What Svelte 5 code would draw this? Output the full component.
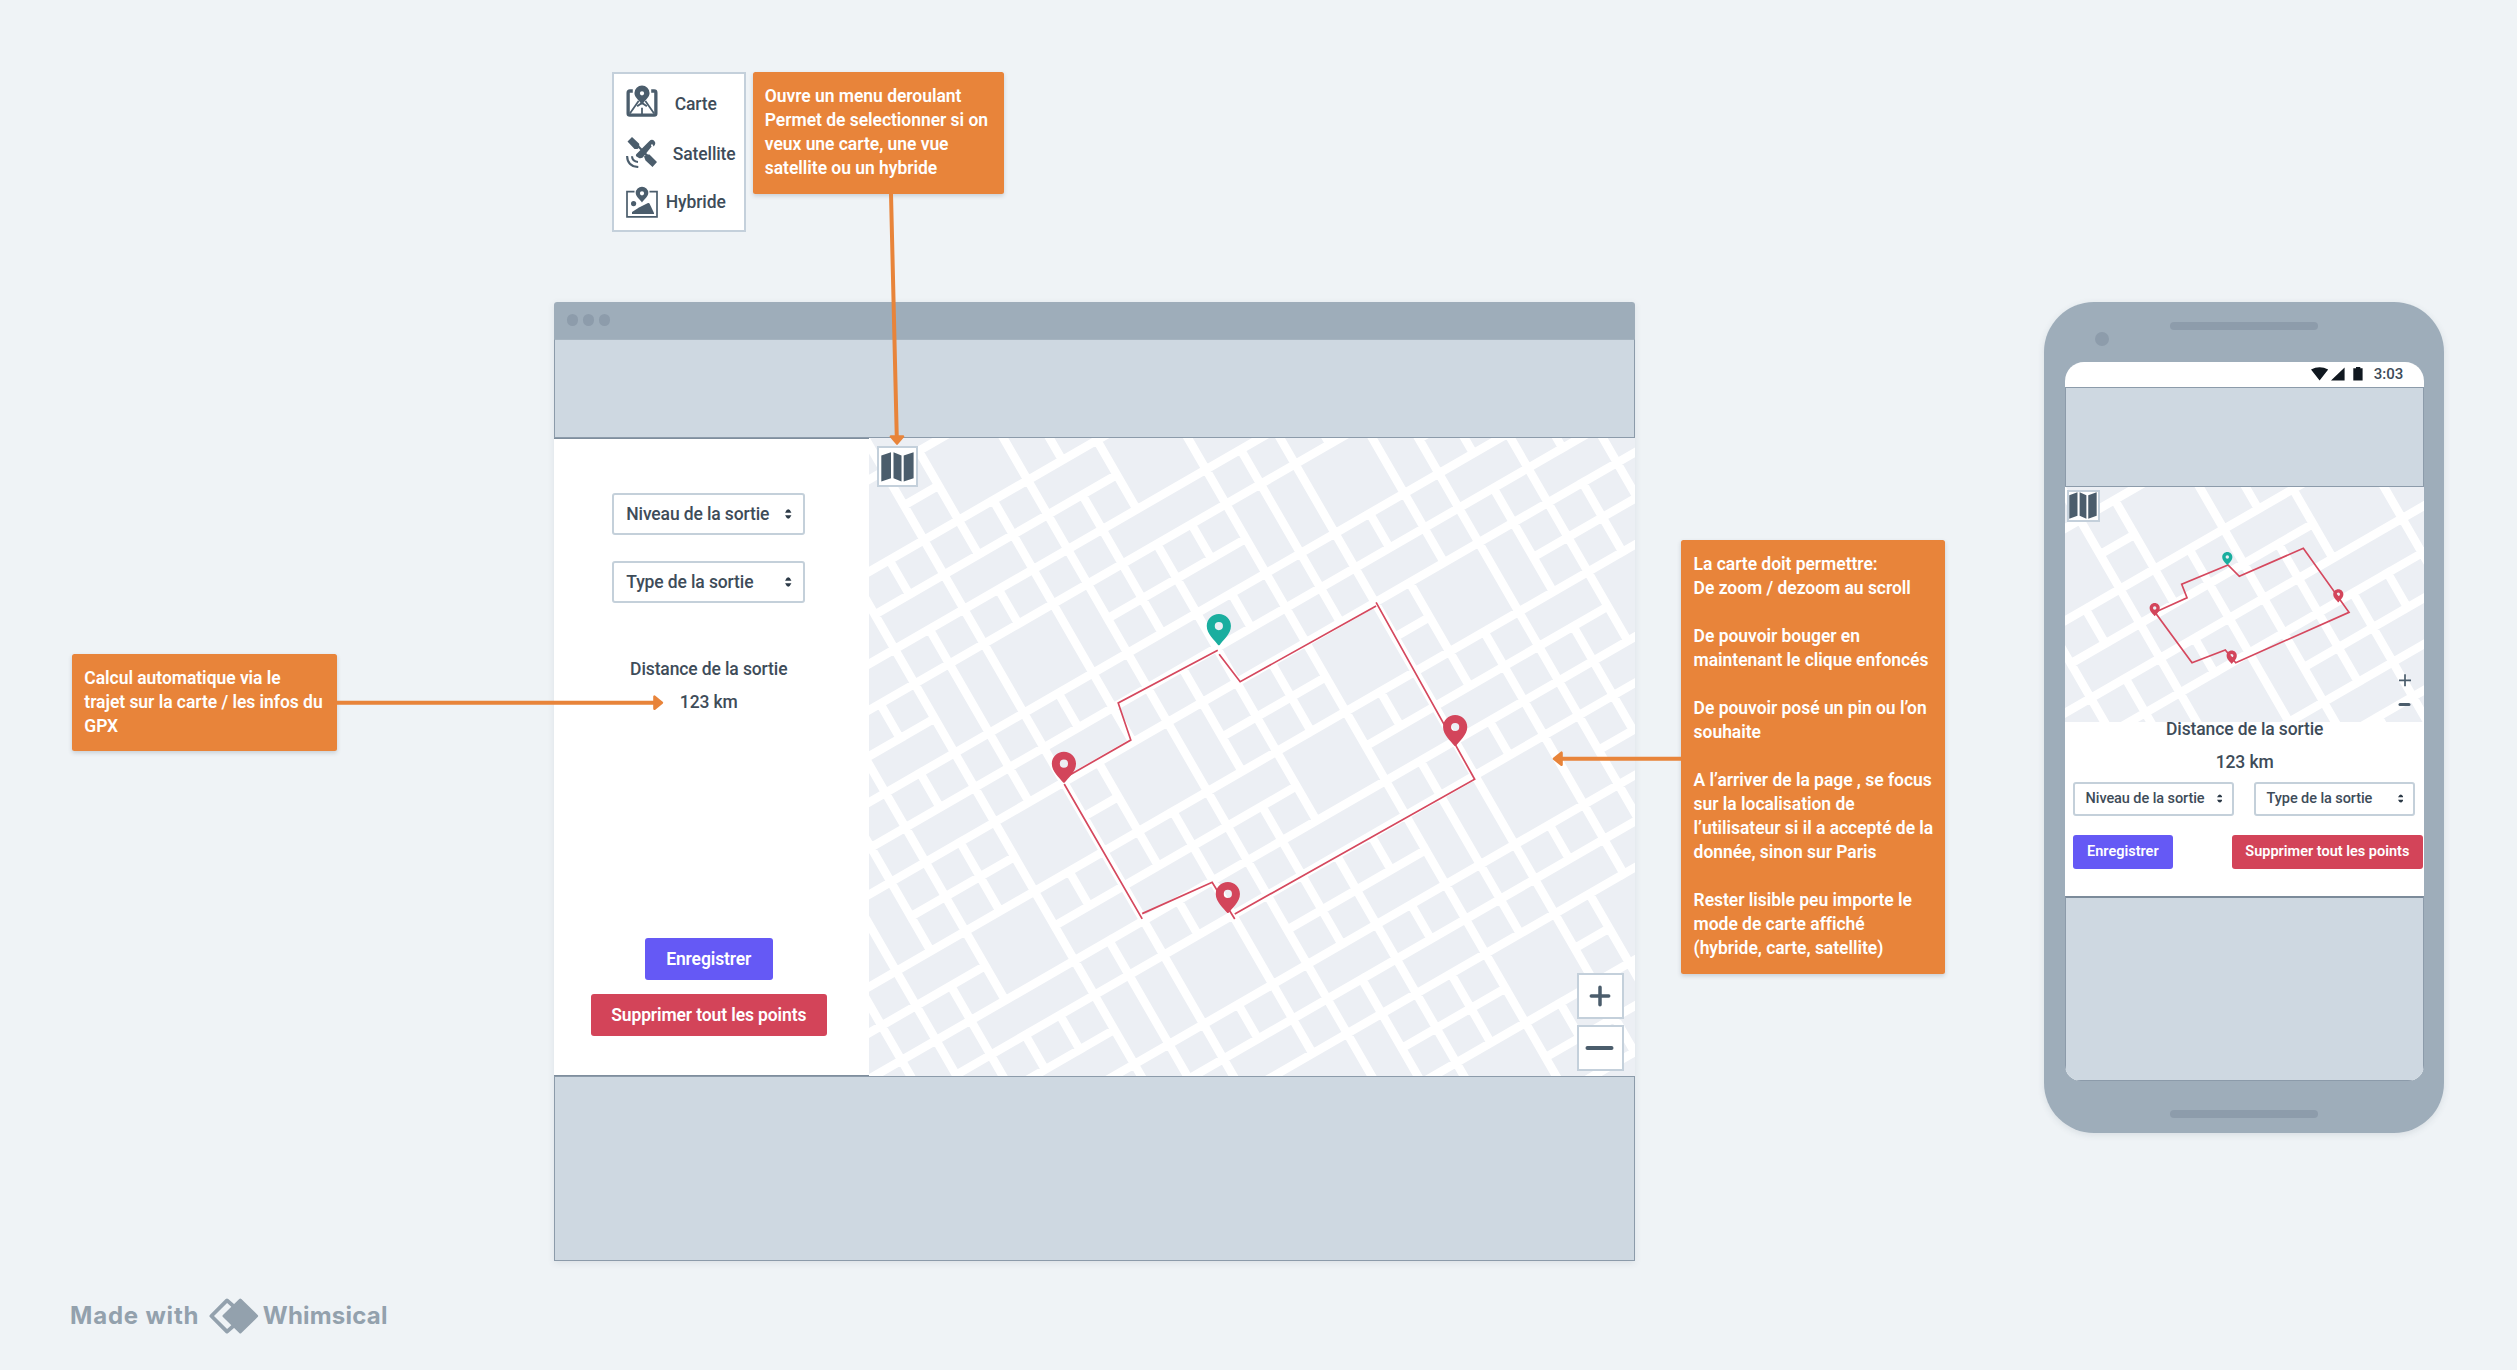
<script>
  // Street grid in block units: rows run along the long axis, columns across it.
  const rows = {
    '-2': [[-1, 2]], '-1': [[0, 1]], 0: [[-2, 5.8]], 1: [[-2, 5]], 2: [[-3, 9]], 3: [[-4, 11]],
    4: [[-4, -2], [3, 7], [12, 13]], 5: [[-5, 14.5]], 6: [[-6, 16]], 7: [[-6, 18]],
    8: [[-5, -2], [0, 1], [4, 7], [9, 10], [13, 17]], 9: [[-7, 17]],
    10: [[-8, -4], [-2, 5], [7, 14]], 11: [[-8, 15]], 12: [[-6, 15]],
    13: [[-5, -2], [3, 7], [12, 13]], 14: [[-3, 13]], 15: [[-2, 12]], 16: [[0, 12]],
    17: [[4, 7], [9, 10]], 18: [[4, 11]], 19: [[7, 10]], 20: [[7, 10]]
  };
  const cols = {
    '-7': [[9, 12]], '-6': [[7, 12]], '-5': [[5, 9], [10, 13]], '-4': [[4, 11], [12, 13]],
    '-3': [[3, 4], [5, 6], [7, 9], [12, 13]], '-2': [[0, 15]],
    '-1': [[0, 1], [2, 7], [9, 10], [11, 15]], 0: [[-3, 16]],
    1: [[-2, 1], [2, 3], [5, 6], [7, 10], [11, 12], [14, 15]], 2: [[0, 7], [9, 16]],
    3: [[-2, 18]], 4: [[-1, 0], [1, 5], [6, 9], [10, 14], [15, 19]],
    5: [[0, 2], [3, 11], [12, 19]], 6: [[3, 4], [5, 6], [7, 9], [12, 13], [14, 15], [16, 18]],
    7: [[0, 20]], 8: [[2, 7], [9, 10], [11, 16], [18, 19]], 9: [[1, 20]],
    10: [[2, 3], [5, 6], [7, 10], [11, 12], [14, 15], [16, 19]], 11: [[3, 7], [9, 16]],
    12: [[3, 15]], 13: [[4, 5], [6, 9], [10, 13]], 14: [[5, 11]], 15: [[5, 6], [7, 9]], 16: [[5, 8]]
  };
  const streets =
    Object.entries(rows).flatMap(([j, s]) => s.map(([a, b]) => `M${a} ${j}H${b}`)).join('') +
    Object.entries(cols).flatMap(([i, s]) => s.map(([a, b]) => `M${i} ${a}V${b}`)).join('');

  const pins = [
    { x: 350, y: 176, kind: 'start' },
    { x: 195, y: 313.7, kind: 'stop' },
    { x: 586.4, y: 277, kind: 'stop' },
    { x: 359, y: 444, kind: 'stop' }
  ];
  const phonePins = [
    { x: 162.3, y: 65, kind: 'start' },
    { x: 89.7, y: 116, kind: 'stop' },
    { x: 273.3, y: 102.3, kind: 'stop' },
    { x: 166.7, y: 163.6, kind: 'stop' }
  ];
</script>

{#snippet grid()}
  <g transform="translate(55 102) rotate(-30) scale(39.95)">
    <path class="street" d={streets} />
  </g>
{/snippet}

{#snippet pin(p, s)}
  <path
    class={p.kind}
    transform="translate({p.x} {p.y}) scale({s})"
    fill-rule="evenodd"
    d="M0 0C-6.7 0-12.1 5.3-12.1 12C-12.1 20-4 26.5-1 30.6Q0 31.6 1 30.6C4 26.5 12.1 20 12.1 12C12.1 5.3 6.7 0 0 0ZM0 7.9A4.1 4.1 0 1 1 0 16.1A4.1 4.1 0 1 1 0 7.9Z"
  />
{/snippet}

{#snippet mapIcon()}
  <svg class="map-icon" viewBox="0 0 33 30" preserveAspectRatio="none">
    <path d="M.3 3.5L10 .2V26.3L.3 29.6ZM12.5 .2L20.5 3.5V29.6L12.5 26.3ZM22.7 3.5L32.6 .2V26.3L22.7 29.6Z" />
  </svg>
{/snippet}

{#snippet select(label)}
  <div class="select">
    <span>{label}</span>
    <svg viewBox="0 0 7 11"><path d="M0 4Q3.5-3.4 7 4ZM0 7H7Q3.5 14.4 0 7Z" /></svg>
  </div>
{/snippet}

<main class="board">
  <section class="node layers">
    <div class="layer carte">
      <svg viewBox="0 0 32 33">
        <path fill="none" stroke="currentColor" stroke-width="3.4" d="M6.5 6.2H3.5Q1.7 6.2 1.7 8V29.3Q1.7 31 3.5 31H28.5Q30.3 31 30.3 29.3V8Q30.3 6.2 28.5 6.2H25.5" />
        <path fill="none" stroke="currentColor" stroke-width="1.8" d="M12.5 16.5L3.5 29.5M19.5 16.5L28.5 29.5M16 23.5V30M11 22L16 18.5L21 22" />
        <path fill-rule="evenodd" d="M16 .5A7.8 7.8 0 0 0 8.2 8.3C8.2 13 12.5 15 16 20.5C19.5 15 23.8 13 23.8 8.3A7.8 7.8 0 0 0 16 .5ZM16 6.4A2.2 2.2 0 1 1 16 10.8A2.2 2.2 0 1 1 16 6.4Z" />
      </svg>
      <span>Carte</span>
    </div>
    <div class="layer sat">
      <svg viewBox="0 0 32 32">
        <path d="M1.5 5.5L6 1L13.2 7.8V11.5L11.5 13H8.5ZM18 20.5L20.5 18.5H23.5L31 26L26.5 31L19.5 24.5Z" />
        <path d="M10.5 10L12 8.6L23 20L21.6 21.4Z" />
        <path d="M10.2 18.2L23.2 5.2Q26 2.6 28.3 5Q30.6 7.4 27.6 10.4L27 9.2Q26.5 7.8 25.2 8.6Q24.6 9.4 25.6 10.6L16.8 21.6Q14.8 22.6 13.4 22.2L10.4 20.4Q9.4 19.4 10.2 18.2Z" />
        <path fill="none" stroke="currentColor" stroke-width="2.1" d="M6 20.3Q6.3 25.6 12 26M1.1 20Q1.3 30.4 12.3 31" />
      </svg>
      <span>Satellite</span>
    </div>
    <div class="layer hyb">
      <svg viewBox="0 0 32 32">
        <path fill="none" stroke="currentColor" stroke-width="1.7" d="M8.5 5.6H1V30.8H31V5.6H23.5" />
        <circle cx="7.6" cy="17.6" r="2.6" />
        <path d="M6 28V26L13 21.5L22 17Q23 16.6 23.5 17.5L28 27V28Z" />
        <path fill-rule="evenodd" d="M16 .8A6.3 6.3 0 0 0 9.7 7C9.7 10.5 14 13.5 16 16.4C18 13.5 22.3 10.5 22.3 7A6.3 6.3 0 0 0 16 .8ZM16 5.2A2.1 2.1 0 1 1 16 9.4A2.1 2.1 0 1 1 16 5.2Z" />
      </svg>
      <span>Hybride</span>
    </div>
  </section>

  <section class="node window">
    <header class="titlebar"><i></i><i></i><i></i></header>
    <div class="block top"></div>
    <div class="body">
      <aside class="side">
        {@render select('Niveau de la sortie')}
        {@render select('Type de la sortie')}
        <p class="label">Distance de la sortie</p>
        <p class="value">123 km</p>
        <button class="btn save">Enregistrer</button>
        <button class="btn clear">Supprimer tout les points</button>
      </aside>
      <div class="map">
        <svg class="canvas" viewBox="0 0 766.5 638">
          {@render grid()}
          <g class="route">
            <path d="M348.9 212.3L249.3 265L261.9 302L195.6 340" />
            <path d="M195.3 346L273.3 481M273.3 475.7L343.3 444.3L365.9 481M365.9 476L605.9 341.3L507.3 164.3M507.3 168L371.3 243.7L350.3 216.3" />
          </g>
          {#each pins as p}{@render pin(p, 1)}{/each}
        </svg>
        <div class="layer-btn">{@render mapIcon()}</div>
        <div class="zoom">
          <div><svg viewBox="0 0 30 22"><path stroke-width="3.5" d="M6.3 11H23.7M15 2.3V19.7" /></svg></div>
          <div><svg viewBox="0 0 30 22"><path stroke-width="4" d="M2.5 11H26.5" /></svg></div>
        </div>
      </div>
    </div>
    <div class="block bottom"></div>
  </section>

  <section class="node phone">
    <div class="speaker"></div>
    <div class="camera"></div>
    <div class="screen">
      <div class="status">
        <svg viewBox="0 0 52 14">
          <path d="M0 2.6Q8.6-2.2 17.2 2.6L8.6 13.6ZM20 13.6L33.6 .4V13.6ZM42.3 1.2H45V0H49.3V1.2H51.6V13.6H42.3Z" />
        </svg>
        <span>3:03</span>
      </div>
      <div class="block"></div>
      <div class="map">
        <svg class="canvas" viewBox="0 0 359.3 235">
          {@render grid()}
          <path class="route" d="M163 78L116.7 97.3L122 110.7L90 125.3L127 175.7L160.3 163L170.7 175.7L284 125.3L238.3 61.3L174.3 89.3Z" />
          {#each phonePins as p}{@render pin(p, 0.42)}{/each}
        </svg>
        <div class="layer-btn">{@render mapIcon()}</div>
        <svg class="zoom-small" viewBox="0 0 14 34">
          <path stroke-width="1.7" d="M1 7.3H13M7 1.3V13.3" /><path stroke-width="3" stroke-linecap="round" d="M2 31.5H11" />
        </svg>
      </div>
      <div class="form">
        <p class="label">Distance de la sortie</p>
        <p class="value">123 km</p>
        <div class="selects">
          {@render select('Niveau de la sortie')}
          {@render select('Type de la sortie')}
        </div>
        <div class="actions">
          <button class="btn save">Enregistrer</button>
          <button class="btn clear">Supprimer tout les points</button>
        </div>
      </div>
      <div class="block last"></div>
    </div>
    <div class="speaker low"></div>
  </section>

  <div class="node note menu-note">Ouvre un menu deroulant<br />Permet de selectionner si on<br />veux une carte, une vue<br />satellite ou un hybride</div>
  <div class="node note calc-note">Calcul automatique via le<br />trajet sur la carte / les infos du<br />GPX</div>
  <div class="node note map-note">La carte doit permettre:<br />De zoom / dezoom au scroll<br /><br />De pouvoir bouger en<br />maintenant le clique enfoncés<br /><br />De pouvoir posé un pin ou l’on<br />souhaite<br /><br />A l’arriver de la page , se focus<br />sur la localisation de<br />l’utilisateur si il a accepté de la<br />donnée, sinon sur Paris<br /><br />Rester lisible peu importe le<br />mode de carte affiché<br />(hybride, carte, satellite)</div>

  <svg class="arrows" viewBox="0 0 2517 1370">
    <path class="line" d="M891 194L896.8 438M336 702.7H655M1682 758.7H1560" />
    <path class="head" d="M891 436.5H903L897 443.5ZM654.5 696.7V708.7L661.8 702.7ZM1561.5 752.7V764.7L1554 758.7Z" />
  </svg>

  <footer class="node brand">
    <span class="made">Made with</span>
    <svg viewBox="0 0 50 36">
      <path fill="none" stroke="currentColor" stroke-width="3.8" stroke-linejoin="round" d="M26 9.5L18 2.4L2.4 18L18 33.6L26 26.5" />
      <path stroke="currentColor" stroke-width="3" stroke-linejoin="round" d="M31.3 2L47.6 18L31.3 34L15 18Z" />
    </svg>
    <span class="name">Whimsical</span>
  </footer>
</main>

<style>
  :global(body) { margin: 0; background: #eff3f6; }
  .board {
    position: relative; width: 2517px; height: 1370px; overflow: hidden;
    background: #eff3f6; color: #3e4c59;
    font: 500 17.5px/24px Roboto, "Liberation Sans", sans-serif;
  }
  .board :global(*) { box-sizing: border-box; }
  svg { display: block; fill: currentColor; }
  p { margin: 0; }
  .node { position: absolute; }

  .layers {
    left: 611.7px; top: 71.7px; width: 134.5px; height: 160.5px;
    background: #fff; border: 2px solid #c4d0db; padding: 10px 0 0 12px;
    display: flex; flex-direction: column; color: #4b5d6c;
  }
  .layer { display: flex; align-items: center; height: 34px; }
  .layer svg { width: 32px; height: 32px; flex: none; }
  .layer span { white-space: nowrap; color: #3e4c59; letter-spacing: -.1px; }
  .carte span { padding: 6px 0 0 17px; }
  .sat { margin-top: 17px; }
  .sat span { padding: 5px 0 0 15px; }
  .hyb { margin-top: 16px; }
  .hyb span { padding: 0 0 0 8px; }

  .note {
    background: #e8843a; color: #fff; border-radius: 2.5px; padding: 12px 12.3px; font-weight: 600;
    white-space: nowrap; box-shadow: 0 2px 4px rgba(50, 70, 90, .2); letter-spacing: -.04px;
  }
  .menu-note { left: 752.5px; top: 72.3px; width: 251px; height: 122px; }
  .calc-note { left: 72px; top: 653.8px; width: 264.5px; height: 97.5px; }
  .map-note { left: 1681.3px; top: 540px; width: 263.4px; height: 433.7px; }

  .arrows { position: absolute; inset: 0; width: 2517px; height: 1370px; }
  .line { fill: none; stroke: #e8843a; stroke-width: 4; }
  .head { fill: #e8843a; stroke: #e8843a; stroke-width: 2.6; stroke-linejoin: round; }

  .window {
    left: 554px; top: 302px; width: 1080.7px; height: 959.3px; border-radius: 3px 3px 0 0; overflow: hidden;
    display: grid; grid-template-rows: 37px 99px 638px 1fr; background: #fff;
    box-shadow: 0 2px 7px rgba(50, 70, 90, .1);
  }
  .titlebar { background: #9eadba; display: flex; gap: 4.5px; padding: 12.3px 0 0 12.5px; }
  .titlebar i { width: 11.6px; height: 11.6px; border-radius: 50%; background: #8d9cab; }
  .block { background: #ced8e1; border: 1px solid #8c9baa; }
  .block.top { border-top-color: #a5b3bf; }
  .body { display: grid; grid-template-columns: 314.5px 1fr; }
  .side {
    background: #fff; display: flex; flex-direction: column; align-items: center; padding: 54px 5px 0 0;
    border-top: 1px solid #7f8e9d; border-bottom: 1px solid #7f8e9d; letter-spacing: -.12px;
  }
  .select {
    width: 193px; height: 41.5px; border: 2px solid #c4d0da; border-radius: 3px; background: #fff;
    display: flex; align-items: center; justify-content: space-between; padding: 1px 11.5px 0 12px; white-space: nowrap;
  }
  .select svg { width: 6.5px; height: 10px; color: #2c3a47; }
  .side .select { margin-bottom: 26.5px; }
  .side .label { margin-top: 28px; }
  .side .value { margin-top: 9px; }
  .btn {
    border: 0; border-radius: 3px; color: #fff; font: inherit; font-weight: 600; letter-spacing: inherit;
    height: 42px; padding: 0; white-space: nowrap;
  }
  .save { background: #6559f5; }
  .clear { background: #d34459; }
  .side .save { width: 127.5px; margin-top: 224px; }
  .side .clear { width: 236.5px; margin-top: 14px; }

  .map { position: relative; background: #eceff4; overflow: hidden; }
  .canvas { width: 100%; height: 100%; }
  .street { fill: none; stroke: #fff; stroke-width: .215; stroke-linecap: square; }
  .route { fill: none; stroke: #d5485e; stroke-width: 1.7; }
  .start { fill: #1aae9f; }
  .stop { fill: #d3455b; }
  .layer-btn {
    position: absolute; left: 8.2px; top: 8px; width: 41px; height: 41px;
    background: #fff; border: 2px solid #c4d0db; padding: 3.5px 2px; color: #4b5d6c;
  }
  .map-icon { width: 33px; height: 30px; }
  .zoom { position: absolute; right: 11px; bottom: 5px; display: grid; gap: 6.5px; }
  .zoom div {
    width: 47px; height: 45.7px; background: #fff; border: 2px solid #c4d0db;
    display: flex; align-items: center; justify-content: center;
  }
  .zoom svg { width: 30px; height: 22px; stroke: #4b5d6c; stroke-linecap: round; }

  .phone {
    left: 2044.3px; top: 302px; width: 400px; height: 831.4px; background: #9eadba; border-radius: 50px;
    box-shadow: 0 2px 7px rgba(50, 70, 90, .12); padding: 60px 20px 0 20.7px;
  }
  .speaker, .camera { position: absolute; background: #8d9cab; }
  .speaker { left: 126px; top: 20px; width: 148px; height: 8px; border-radius: 4px; }
  .speaker.low { top: 807.5px; }
  .camera { left: 51px; top: 30px; width: 14px; height: 14px; border-radius: 50%; }
  .screen {
    height: 719px; border-radius: 19px 19px 16px 16px; overflow: hidden; background: #fff;
    display: grid; grid-template-rows: 24.5px 100.5px 235px 174px 1fr;
  }
  .status { display: flex; justify-content: flex-end; align-items: center; gap: 11px; padding-right: 21px; font-size: 15px; }
  .status svg { width: 52px; height: 14px; color: #101820; }
  .phone .layer-btn { left: 2.3px; top: 3px; width: 33px; height: 32px; padding: .3px 0 0 0; }
  .phone .map-icon { width: 28px; height: 27px; }
  .zoom-small { position: absolute; left: 332.7px; top: 186px; width: 14px; height: 34px; stroke: #4b5d6c; fill: none; }
  .form { display: flex; flex-direction: column; align-items: center; }
  .form .label { margin-top: -5.3px; letter-spacing: -.12px; }
  .form .value { margin-top: 9px; letter-spacing: -.12px; }
  .selects { display: flex; gap: 19.5px; align-self: flex-start; padding-left: 7.6px; margin-top: 8px; font-size: 14.5px; letter-spacing: -.08px; }
  .phone .select { width: 161.5px; height: 34px; padding: 0 10px 0 11px; }
  .phone .select svg { width: 5.5px; height: 9px; }
  .actions { display: flex; justify-content: space-between; width: 100%; padding: 0 1.2px 0 7.6px; margin-top: 19px; font-size: 14.5px; }
  .phone .btn { height: 34px; }
  .phone .save { width: 100.5px; }
  .phone .clear { width: 191.5px; }
  .last { border-top: 2px solid #7c8b9a; }

  .brand {
    left: 70px; top: 1298.2px; height: 36px; display: flex; align-items: center; color: #93a1ad;
    font: 700 24px/36px Inter, "Liberation Sans", sans-serif;
  }
  .brand svg { width: 50px; height: 36px; margin: 0 4px 0 9.5px; }
  .made { letter-spacing: .8px; }
  .name { letter-spacing: .2px; }
</style>
